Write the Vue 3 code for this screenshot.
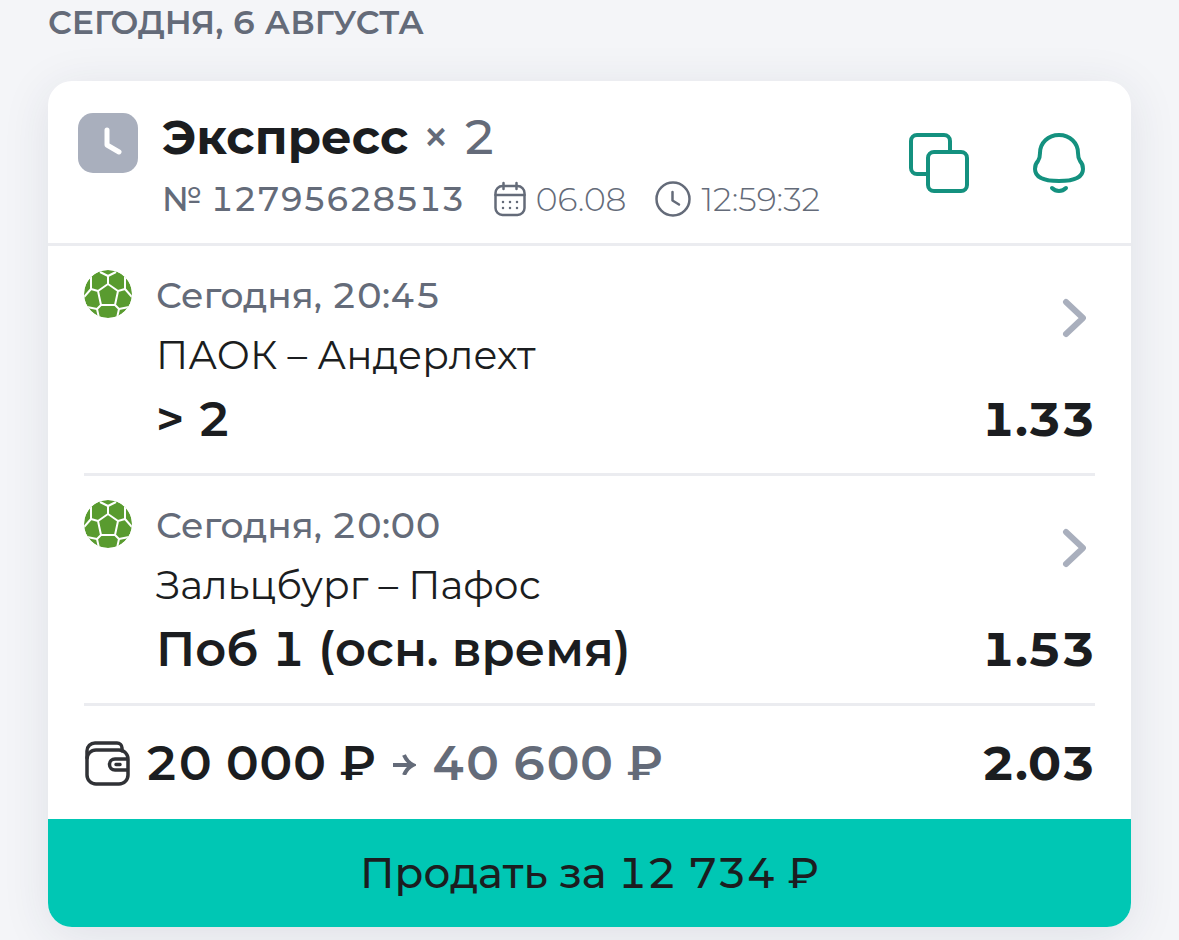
<script setup>
import { ref } from 'vue'

const coupon = ref({
  title: 'Экспресс',
  count: 2,
  number: '12795628513',
  date: '06.08',
  time: '12:59:32',
  stake: '20 000 ₽',
  win: '40 600 ₽',
  total: '2.03',
  cashout: '12 734 ₽'
})

const events = ref([
  { id: 1, start: 'Сегодня, 20:45', teams: 'ПАОК – Андерлехт', pick: '> 2', odds: '1.33' },
  { id: 2, start: 'Сегодня, 20:00', teams: 'Зальцбург – Пафос', pick: 'Поб 1 (осн. время)', odds: '1.53' }
])
</script>

<template>
  <main class="history">
    <h2 class="day">Сегодня, 6 августа</h2>

    <article class="coupon">
      <header class="head">
        <svg class="state" viewBox="0 0 60 60" aria-hidden="true">
          <rect width="60" height="60" rx="15" />
          <path d="M29 17v15l12 7" />
        </svg>

        <div class="summary">
          <h3 class="title">
            {{ coupon.title }} <span class="count">× {{ coupon.count }}</span>
          </h3>
          <div class="meta">
            <span class="number">№ {{ coupon.number }}</span>
            <span class="stamp">
              <svg class="calendar" viewBox="0 0 32 36" aria-hidden="true">
                <rect x="1.5" y="5" width="29" height="29" rx="7" />
                <path d="M1.5 14h29M9.500 2v6M22.500 2v6" />
                <path class="dots" d="M9 21h0M16 21h0M23 21h0M9 27h0M16 27h0M23 27h0" />
              </svg>
              {{ coupon.date }}
            </span>
            <span class="stamp">
              <svg class="clock" viewBox="0 0 36 36" aria-hidden="true">
                <circle cx="18" cy="18" r="16.5" />
                <path d="M17.5 11v8.500l6.500 4" />
              </svg>
              {{ coupon.time }}
            </span>
          </div>
        </div>

        <div class="actions">
          <button type="button" aria-label="Копировать купон">
            <svg class="copy" viewBox="0 0 60 60" aria-hidden="true">
              <path d="M17 41H8a6 6 0 0 1-6-6V8a6 6 0 0 1 6-6h27a6 6 0 0 1 6 6v9" />
              <rect x="19" y="19" width="39" height="39" rx="6" />
            </svg>
          </button>
          <button type="button" aria-label="Уведомления">
            <svg class="bell" viewBox="0 0 52 60" aria-hidden="true">
              <path d="M26 2C15 2 7 10 7 20c0 4 0 5-2 8-2 2-3 5-3 8 0 8 8 12 24 12s24-4 24-12c0-3-1-6-3-8-2-3-2-4-2-8C45 10 37 2 26 2Z" />
              <path d="M19 55c4 4 10 4 14 0" />
            </svg>
          </button>
        </div>
      </header>

      <div class="body">
        <a v-for="event in events" :key="event.id" class="event" href="#">
          <svg class="ball" viewBox="0 0 48 48" aria-hidden="true">
            <circle cx="24" cy="24" r="24" />
            <path d="M24 14l10 7-3 14H17l-3-14zM24 14V6M34 21l7-2M31 35l4 4M17 35l-4 4M14 21l-7-2" />
            <path d="M24 6l-8-4M24 6l8-4M41 19V7M41 19l7 8M7 19V7M7 19l-7 8M35 39l-2 9M35 39l10-2M13 39l2 9M13 39L3 37" />
          </svg>
          <span class="info">
            <span class="start">{{ event.start }}</span>
            <span class="teams">{{ event.teams }}</span>
            <span class="pick">{{ event.pick }}</span>
          </span>
          <span class="side">
            <svg class="chevron" viewBox="0 0 24 40" aria-hidden="true">
              <path d="M4 4l17 16L4 36" />
            </svg>
            <span class="odds">{{ event.odds }}</span>
          </span>
        </a>

        <div class="money">
          <svg class="wallet" viewBox="0 0 46 46" aria-hidden="true">
            <rect x="3" y="10" width="41" height="34" rx="9" />
            <path d="M3 18v-7a8 8 0 0 1 8-8h22a5 5 0 0 1 5 5v3" />
            <path d="M43 19H31a5 5 0 0 0 0 11h12M32 24.5h4" />
          </svg>
          <span class="stake">{{ coupon.stake }}</span>
          <svg class="arrow" viewBox="0 0 24 24" aria-hidden="true">
            <path d="M1 14h20M12 4q3 7 9 10q-6 3-9 10" />
          </svg>
          <span class="win">{{ coupon.win }}</span>
          <span class="odds">{{ coupon.total }}</span>
        </div>
      </div>

      <button type="button" class="sell">Продать за {{ coupon.cashout }}</button>
    </article>
  </main>
</template>

<style>
body {
  background: #f4f5f8;
}
</style>

<style scoped>
.history {
  color: #1b1d20;
  font-family: Montserrat, Inter, 'Open Sans', sans-serif;
  font-variant-numeric: tabular-nums;
  padding: 0 48px 13px;
}

.day {
  color: #646b79;
  font-size: 33px;
  font-weight: 600;
  line-height: 44px;
  margin: 0 0 37px;
  text-transform: uppercase;
}

.coupon {
  background: #fff;
  border-radius: 24px;
  box-shadow: 0 8px 48px rgba(40, 50, 80, 0.1);
  overflow: hidden;
}

.head {
  border-bottom: 3px solid #ebecf0;
  display: flex;
  padding: 26px 46px 20px 30px;
}

.state {
  height: 60px;
  margin: 6px 24px 0 0;
  width: 60px;
}

.state rect {
  fill: #a9afbd;
}

.state path {
  fill: none;
  stroke: #fff;
  stroke-linecap: round;
  stroke-linejoin: round;
  stroke-width: 5;
}

.summary {
  flex: 1;
  min-width: 0;
}

.title {
  font-size: 48px;
  font-weight: 700;
  line-height: 60px;
  margin: 0 0 8px;
}

.count {
  color: #646b79;
  font-weight: 500;
}

.meta {
  align-items: center;
  color: #646b79;
  display: flex;
  font-size: 33px;
  gap: 29px;
  line-height: 48px;
  white-space: nowrap;
}

.number {
  font-weight: 500;
}

.stamp {
  align-items: center;
  display: flex;
  font-variant-numeric: normal;
  font-weight: 300;
  gap: 10px;
}

.meta svg {
  fill: none;
  height: 36px;
  stroke: #646b79;
  stroke-linecap: round;
  stroke-linejoin: round;
  stroke-width: 2.5;
}

.calendar {
  width: 32px;
}

.clock {
  width: 36px;
}

.actions {
  align-items: center;
  display: flex;
  gap: 64px;
  padding-bottom: 4px;
}

.actions button {
  background: none;
  border: 0;
  cursor: pointer;
  display: flex;
  padding: 0;
}

.actions svg {
  fill: none;
  height: 60px;
  stroke: #14917f;
  stroke-linecap: round;
  stroke-linejoin: round;
  stroke-width: 4;
}

.copy {
  width: 60px;
}

.bell {
  width: 52px;
}

.body {
  padding: 0 36px;
}

.event {
  border-bottom: 3px solid #ebecf0;
  color: inherit;
  display: flex;
  padding: 19px 0 20px;
  text-decoration: none;
}

.ball {
  border-radius: 50%;
  height: 48px;
  margin: 5px 24px 0 0;
  width: 48px;
}

.ball circle {
  fill: #599b2f;
}

.ball path {
  fill: none;
  stroke: #fff;
  stroke-linejoin: round;
  stroke-width: 2;
}

.info {
  display: flex;
  flex: 1;
  flex-direction: column;
}

.start,
.teams {
  line-height: 60px;
}

.start {
  color: #646b79;
  font-size: 36px;
  font-weight: 500;
}

.teams {
  font-size: 39px;
  font-weight: 400;
}

.pick,
.odds {
  font-size: 48px;
  font-weight: 700;
  line-height: 68px;
}

.pick {
  font-weight: 600;
}

.side {
  align-items: flex-end;
  display: flex;
  flex-direction: column;
}

.chevron {
  fill: none;
  height: 40px;
  margin: 33px 9px 47px 0;
  stroke: #a9afbd;
  stroke-linecap: round;
  stroke-linejoin: round;
  stroke-width: 6;
  width: 24px;
}

.money {
  align-items: center;
  display: flex;
  font-size: 48px;
  font-weight: 600;
  line-height: 68px;
  padding: 23px 0 22px;
}

.wallet {
  fill: none;
  height: 46px;
  margin-right: 15px;
  stroke: #303236;
  stroke-linecap: round;
  stroke-linejoin: round;
  stroke-width: 3.5;
  width: 46px;
}

.arrow {
  fill: none;
  height: 24px;
  margin: 0 16px;
  stroke: #646b79;
  stroke-width: 4;
  width: 24px;
}

.win {
  color: #646b79;
}

.money .odds {
  margin-left: auto;
}

.sell {
  background: #00c7b4;
  border: 0;
  color: #1b1d20;
  cursor: pointer;
  display: block;
  font: inherit;
  font-size: 42px;
  font-weight: 500;
  line-height: 60px;
  padding: 24px;
  width: 100%;
}
</style>
